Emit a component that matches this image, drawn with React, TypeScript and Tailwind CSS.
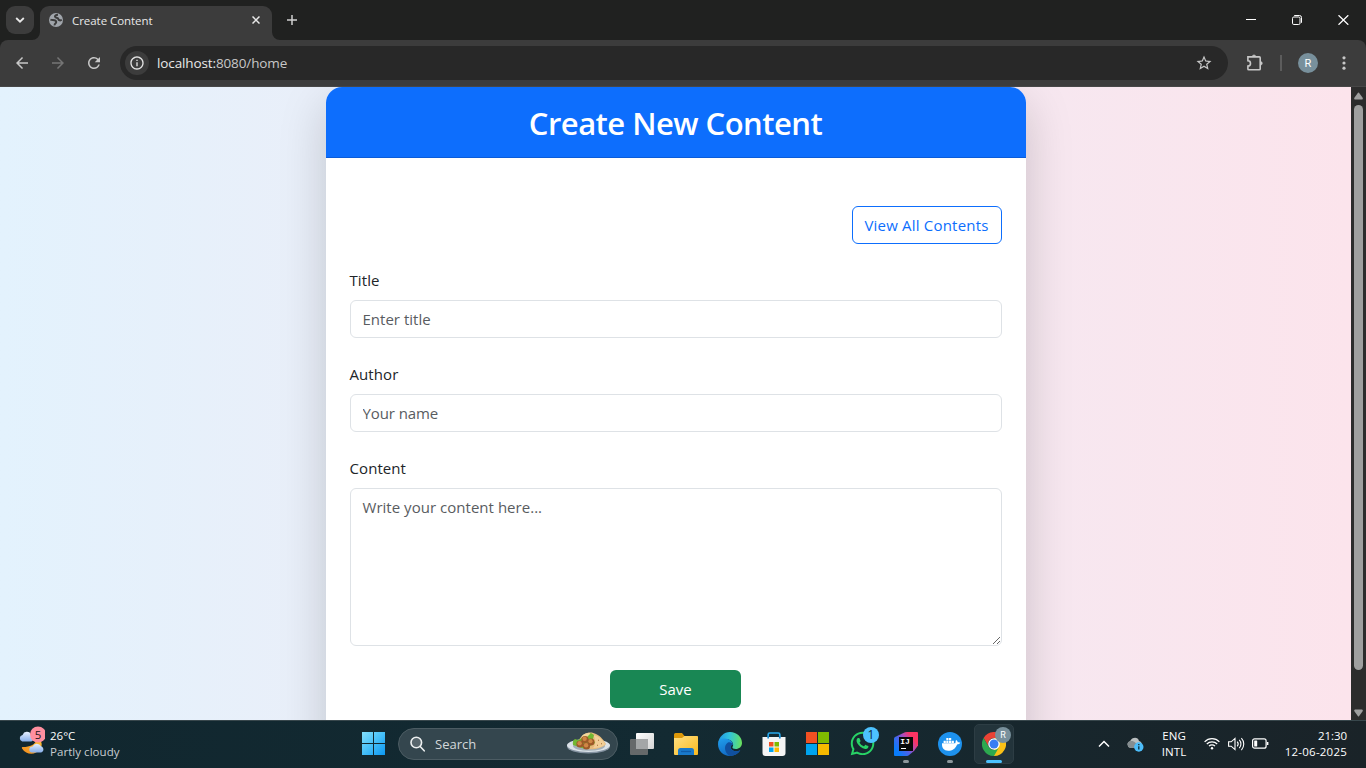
import type { ReactNode } from 'react';
import {
  MdArrowBack,
  MdArrowForward,
  MdOutlineInfo,
  MdRefresh,
  MdStarBorder,
} from 'react-icons/md';
import { FaWhatsapp } from 'react-icons/fa';

function TabStrip() {
  return (
    <div className="flex h-10 shrink-0 bg-[#202120] pl-1.5">
      <button className="mt-1.5 flex h-7 w-7 items-center justify-center rounded-[9px] bg-[#3c3c3c]">
        <svg width="10" height="6" viewBox="0 0 10 6" fill="none" stroke="#e8e8e8" strokeWidth="1.8">
          <path d="M1.2 1l3.8 3.7L8.8 1" />
        </svg>
      </button>
      <svg className="w-2 self-end ml-[-2px]" width="8" height="8" viewBox="0 0 8 8" fill="#3c3c3c">
        <path d="M8 0v8H0a8 8 0 0 0 8-8z" />
      </svg>
      <div className="mt-1.5 flex h-[34px] w-[232px] items-center rounded-t-[9px] bg-[#3c3c3c] pl-[9px] pb-[6px]">
        <svg width="14" height="14" viewBox="0 0 14 14">
          <circle cx="7" cy="7" r="7" fill="#a0a5ab" />
          <path
            d="M9 1.700C6.500 1.800 5.200 3.200 6.500 4.300S9 4.500 9.300 6 11.500 7.800 12.800 6.800M1.400 6.600C3 7.200 4 6.800 5.500 7.200S7.600 8.800 7 9.800 5.400 10.500 5.600 12.400"
            fill="none"
            stroke="#3c3c3c"
            strokeWidth="2"
          />
        </svg>
        <span className="ml-[9px] flex-1 pt-px text-[11.5px] leading-4 tracking-[-0.05px] text-[#e8e8e8]">Create Content</span>
        <svg className="mr-3" width="8" height="8" viewBox="0 0 8 8" stroke="#e8e8e8" strokeWidth="1.5">
          <path d="M.5.5l7 7M7.5.5l-7 7" />
        </svg>
      </div>
      <svg className="self-end" width="8" height="8" viewBox="0 0 8 8" fill="#3c3c3c">
        <path d="M0 0v8h8a8 8 0 0 1-8-8z" />
      </svg>
      <svg className="mt-[15px] ml-[7px]" width="10" height="10" viewBox="0 0 10 10" stroke="#d0d0d0" strokeWidth="1.5">
        <path d="M5 0v10M0 5h10" />
      </svg>
      <div className="ml-auto mr-[17px] flex gap-9 pt-[15px]">
        <svg width="10" height="10" viewBox="0 0 10 10" stroke="#fff" strokeWidth="1">
          <path d="M0 4.5h10" />
        </svg>
        <svg width="10" height="10" viewBox="0 0 10 10" fill="none" stroke="#fff" strokeWidth="1">
          <rect x=".5" y="2" width="7.5" height="7.5" rx="1.3" />
          <path d="M2.2.5H7.5a2 2 0 0 1 2 2v5.3" />
        </svg>
        <svg width="11" height="10" viewBox="0 0 11 10" stroke="#fff" strokeWidth="1.2">
          <path d="M.5.2l9.8 9.6M10.3.2L.5 9.8" />
        </svg>
      </div>
    </div>
  );
}

function Toolbar() {
  return (
    <div className="shrink-0 bg-[#202120]">
      <div className="flex h-[47px] items-center rounded-t-lg border-b border-[#474747] bg-[#3c3c3c] pl-[13px] text-[#c7c7c7]">
        <MdArrowBack size={18} />
        <MdArrowForward size={18} className="ml-[18px] text-[#757575]" />
        <MdRefresh size={18} className="ml-[18px]" />
        <div className="ml-[17px] flex h-[34px] w-[1108px] items-center rounded-full bg-[#282828] pl-[5px] pr-[15px]">
          <div className="flex h-6 w-6 items-center justify-center rounded-full bg-[#3c3c3c]">
            <MdOutlineInfo size={16} className="text-[#e3e3e3]" />
          </div>
          <span className="ml-2 flex-1 text-[13.5px] leading-5 tracking-[-0.12px] text-[#e8e8e8]">
            localhost:<span className="text-[#c7c7c7]">8080/home</span>
          </span>
          <MdStarBorder size={18} />
        </div>
        <svg className="ml-[18px]" width="18" height="18" viewBox="0 0 18 18" fill="none" stroke="#c7c7c7" strokeWidth="1.6">
          <path d="M1.900 2.900H13.300a.9.9 0 0 1 .9.9V14.900a.9.9 0 0 1-.9.9H2.800a.9.9 0 0 1-.9-.9V12a2.600 2.600 0 0 0 0-5.200z" />
          <path d="M6.300 2.600a1.700 1.700 0 0 1 3.400 0zM14.600 7.600a1.700 1.700 0 0 1 0 3.400z" fill="#c7c7c7" strokeWidth=".6" />
        </svg>
        <div className="ml-4 h-4 w-0.5 bg-[#5c5c5c]" />
        <div className="ml-4 flex h-5 w-5 items-center justify-center rounded-full bg-[#78909c] pt-px font-['Roboto',sans-serif] text-[11px] leading-none text-white">
          R
        </div>
        <svg className="ml-6" width="4" height="14" viewBox="0 0 4 14" fill="#c7c7c7">
          <circle cx="2" cy="1.8" r="1.6" />
          <circle cx="2" cy="7" r="1.6" />
          <circle cx="2" cy="12.2" r="1.6" />
        </svg>
      </div>
    </div>
  );
}

function Field({ label, children }: { label: string; children: ReactNode }) {
  return (
    <div className="mb-6 flex flex-col">
      <label className="mb-2 text-[15px] leading-6 tracking-[0.08px] text-[#212529]">{label}</label>
      {children}
    </div>
  );
}

function ContentPage() {
  return (
    <div className="flex min-h-0 flex-1">
      <main className="flex min-w-0 flex-1 items-start justify-center overflow-hidden bg-linear-to-r from-[#e3f2fd] to-[#fce4ec]">
        <section className="h-[680px] w-[700px] shrink-0 overflow-hidden rounded-2xl bg-white shadow-[0_16px_48px_rgba(0,0,0,0.175)]">
          <header className="flex h-[71px] items-center justify-center border-b border-[#0b5cd8] bg-[#0d6efd] pt-0.5">
            <h3 className="text-[31px] leading-[38px] font-semibold tracking-[-0.53px] text-white">Create New Content</h3>
          </header>
          <div className="flex flex-col px-6 pt-12">
            <button className="mb-6 h-[38px] w-[150px] self-end rounded-md border border-[#0d6efd] text-[15px] leading-6 tracking-[0.2px] text-[#0d6efd]">
              View All Contents
            </button>
            <Field label="Title">
              <input
                className="h-[38px] rounded-md border border-[#dee2e6] px-3 text-[15px] tracking-[0.01px] placeholder:text-[#595c5f]"
                placeholder="Enter title"
              />
            </Field>
            <Field label="Author">
              <input
                className="h-[38px] rounded-md border border-[#dee2e6] px-3 text-[15px] tracking-[-0.1px] placeholder:text-[#595c5f]"
                placeholder="Your name"
              />
            </Field>
            <Field label="Content">
              <textarea
                className="h-[158px] resize-y rounded-md border border-[#dee2e6] px-3 py-1.5 text-[15px] leading-6 tracking-[0.03px] placeholder:text-[#595c5f]"
                placeholder="Write your content here..."
              />
            </Field>
            <button className="h-[38px] w-[131px] self-center rounded-md bg-[#198754] text-[15px] text-white">Save</button>
          </div>
        </section>
      </main>
      <div className="flex w-[15px] shrink-0 flex-col items-center bg-[#2c2c2c] pt-[5px] pb-[3px]">
        <svg width="9" height="8" viewBox="0 0 9 8" fill="#9f9f9f">
          <path d="M4 .8Q4.500.2 5 .8L8.800 6Q9 7.500 8 7.500H1Q0 7.500.2 6z" />
        </svg>
        <div className="mt-[5px] h-[565px] w-[9px] rounded-full bg-[#9f9f9f]" />
        <svg className="mt-auto" width="9" height="8" viewBox="0 0 9 8" fill="#9f9f9f">
          <path d="M4 7.200Q4.500 7.800 5 7.200L8.800 2Q9 .5 8 .5H1Q0 .5.2 2z" />
        </svg>
      </div>
    </div>
  );
}

function WeatherIcon() {
  return (
    <svg className="mb-1.5" width="28" height="30" viewBox="0 0 28 30">
      <defs>
        <linearGradient id="cloud" x1="0" y1="0" x2="0" y2="1">
          <stop offset="0" stopColor="#e6f0ff" />
          <stop offset="1" stopColor="#86aeea" />
        </linearGradient>
        <linearGradient id="moon" x1="0" y1="1" x2="1" y2="0">
          <stop offset="0" stopColor="#f08a1c" />
          <stop offset="1" stopColor="#ffc13a" />
        </linearGradient>
      </defs>
      <path d="M20 13c5 1 6 6 3 10-4 6-13 7-18-.5-.5-1 0-1.500 1-1.500C13 21 18 19 20 13z" fill="url(#moon)" />
      <path d="M5.200 15.500a3.400 3.400 0 0 1 .4-6.600 4.600 4.600 0 0 1 8.400-.6c3 1 3 7.200 0 7.200z" fill="url(#cloud)" />
      <path d="M15 26.500a3 3 0 0 1 .6-6 4.600 4.600 0 0 1 8.400-.2c3.500 1 3 6.200-.2 6.200z" fill="url(#cloud)" />
      <circle cx="21" cy="8.500" r="8" fill="#ff8f9f" />
      <text x="21" y="12.600" textAnchor="middle" fontSize="11.500" fill="#25171b">
        5
      </text>
    </svg>
  );
}

function StartIcon() {
  return (
    <svg width="23" height="23" viewBox="0 0 23 23">
      <defs>
        <linearGradient id="start" x1="0" y1="0" x2="23" y2="23" gradientUnits="userSpaceOnUse">
          <stop offset="0" stopColor="#83dffb" />
          <stop offset=".5" stopColor="#45bff8" />
          <stop offset="1" stopColor="#0c98f2" />
        </linearGradient>
      </defs>
      <path d="M0 0h11v11H0zM12 0h11v11H12zM0 12h11v11H0zM12 12h11v11H12z" fill="url(#start)" />
    </svg>
  );
}

function FalafelIcon() {
  return (
    <svg className="mb-0.5" width="43" height="22" viewBox="0 0 43 22">
      <ellipse cx="21.500" cy="14.500" rx="21.500" ry="7" fill="#8492a0" />
      <ellipse cx="21.500" cy="13.300" rx="21.500" ry="6.600" fill="#dbe2e8" />
      <ellipse cx="22" cy="14" rx="16" ry="4.800" fill="#a3afb8" />
      <path d="M12 8C16 0 24-1 29 2c5 2 8 7 10 10-3 4-12 6-19 5z" fill="#e6bb7d" />
      <path d="M26 3c6 1 10 5 12 9-2 3-7 4-12 4 3-3 3-9 0-13z" fill="#f2cf98" />
      <path d="M6 13c-.5-3 0-5 2-6l3 1 4-2 3 1 3-5 3-1 3 2-1 4 2 4-10 6z" fill="#72b832" />
      <path d="M14.500 5c2-4 7-4.500 9-3.500L20 5z" fill="#f1d59b" />
      <g fill="#9c5928">
        <circle cx="18" cy="7.500" r="3.600" />
        <circle cx="24" cy="10" r="3.500" />
        <circle cx="13" cy="12" r="3.600" />
        <circle cx="19.500" cy="14" r="3.600" />
      </g>
      <g fill="#cf8745">
        <circle cx="17.600" cy="6.700" r="2.200" />
        <circle cx="23.500" cy="9.200" r="2.100" />
        <circle cx="12.600" cy="11.200" r="2.200" />
        <circle cx="19.100" cy="13.200" r="2.200" />
      </g>
      <path d="M31 8l1 .5M34 12l1-.5M30 13l1 .5" stroke="#a56c35" />
    </svg>
  );
}

function TaskViewIcon() {
  return (
    <svg width="24" height="22" viewBox="0 0 24 22">
      <defs>
        <linearGradient id="front" x1="0" y1="0" x2="1" y2="1">
          <stop offset="0" stopColor="#fff" />
          <stop offset="1" stopColor="#d4d4d4" />
        </linearGradient>
      </defs>
      <rect x="6" y="0" width="18" height="16" rx="1" fill="url(#front)" />
      <rect x="0" y="6" width="18" height="16" rx="1" fill="#66696a" />
      <path d="M6 6h12v10H6z" fill="#a4a6a7" />
    </svg>
  );
}

function FolderIcon() {
  return (
    <svg width="24" height="22" viewBox="0 0 24 22">
      <defs>
        <linearGradient id="folder" x1="0" y1="0" x2="1" y2="1">
          <stop offset="0" stopColor="#ffe083" />
          <stop offset="1" stopColor="#fbb91d" />
        </linearGradient>
      </defs>
      <path d="M0 1.500Q0 0 1.500 0H8l2.500 3H22.500Q24 3 24 4.500V8H0z" fill="#dd9809" />
      <path d="M0 5h8l2.500-2H23q1 0 1 1.200V21q0 1-1 1H1q-1 0-1-1z" fill="url(#folder)" />
      <path d="M4 22v-4.500Q4 15 6.500 15h11q2.500 0 2.500 2.500V22z" fill="#1979ca" />
      <path d="M7 18.500h10" stroke="#0f5ba8" strokeWidth="1.300" />
    </svg>
  );
}

function EdgeIcon() {
  return (
    <svg width="24" height="24" viewBox="0 0 24 24">
      <defs>
        <linearGradient id="edgeCrest" x1="0" y1="8" x2="24" y2="10" gradientUnits="userSpaceOnUse">
          <stop offset="0" stopColor="#2196e3" />
          <stop offset=".45" stopColor="#31c2dd" />
          <stop offset=".75" stopColor="#4bd49a" />
          <stop offset="1" stopColor="#6be05a" />
        </linearGradient>
        <linearGradient id="edgeBody" x1="4" y1="7" x2="10" y2="24" gradientUnits="userSpaceOnUse">
          <stop offset="0" stopColor="#1f9ae8" />
          <stop offset="1" stopColor="#1169c4" />
        </linearGradient>
      </defs>
      <path
        d="M0 11.500C1 4.500 6 0 12 0 19 0 24 5 24 11c0 3.800-3 6-6.200 6-2.300 0-3.800-1-3.300-2 1.500-2 .8-6.500-4.500-7.800C6 6.500 2 8 0 11.500z"
        fill="url(#edgeCrest)"
      />
      <path
        d="M0 12c.3-4 4-5.800 8-5.300 4.500.5 7 3.300 6.600 6-1.300.3-2.200 1.300-2 2.800.5 3.200 5 4.800 9.700 2.800C20 22 16 24 12 24 5 24 0 18.800 0 12z"
        fill="url(#edgeBody)"
      />
      <path
        d="M10 10.500C5.500 13 6 21 12 24c4 0 8-2 10.300-5.700-4.700 2-9.200.4-9.700-2.800-.2-1.500.7-2.500 2-2.800.1-1.700-2.500-3.200-4.600-2.200z"
        fill="#10509f"
      />
    </svg>
  );
}

function StoreIcon() {
  return (
    <svg width="24" height="24" viewBox="0 0 24 24">
      <path d="M6.200 6V2.500Q6.200 1 7.700 1h8.600q1.500 0 1.500 1.500V6" fill="none" stroke="#29a9ec" strokeWidth="1.700" />
      <path d="M.5 5h23v16q0 3-3 3h-17q-3 0-3-3z" fill="#f4f4f4" />
      <path d="M6.200 4v2.500M17.800 4v2.500" stroke="#1686cb" strokeWidth="1.700" />
      <path d="M7 10h4.500v4.500H7z" fill="#f25022" />
      <path d="M12.500 10H17v4.500h-4.500z" fill="#7fba00" />
      <path d="M7 15.500h4.500V20H7z" fill="#00a4ef" />
      <path d="M12.500 15.500H17V20h-4.500z" fill="#ffb900" />
    </svg>
  );
}

function MicrosoftIcon() {
  return (
    <svg className="mr-px" width="23" height="23" viewBox="0 0 23 23">
      <path d="M0 0h11v11H0z" fill="#f25022" />
      <path d="M12 0h11v11H12z" fill="#7fba00" />
      <path d="M0 12h11v11H0z" fill="#00a4ef" />
      <path d="M12 12h11v11H12z" fill="#f5b900" />
    </svg>
  );
}

function IntelliJIcon() {
  return (
    <svg width="24" height="24" viewBox="0 0 24 24">
      <defs>
        <linearGradient id="ij" x1="2" y1="18" x2="22" y2="4" gradientUnits="userSpaceOnUse">
          <stop offset="0" stopColor="#087cfa" />
          <stop offset=".35" stopColor="#4a63ea" />
          <stop offset=".6" stopColor="#b14ab8" />
          <stop offset=".85" stopColor="#fb3463" />
        </linearGradient>
      </defs>
      <path d="M0 7Q0 5.500 1 5L11 .3Q12 0 13 0H23Q24 0 24 1V13.500L20 19l-5.500 4.600Q14 24 13 24H1Q0 24 0 23z" fill="url(#ij)" />
      <path d="M5 5h14v14H5z" fill="#090909" />
      <text x="6.200" y="12.300" fontSize="8" fontWeight="700" fill="#fff" fontFamily="Liberation Mono">
        IJ
      </text>
      <path d="M7 16.500h5" stroke="#fff" />
    </svg>
  );
}

function DockerIcon() {
  return (
    <svg width="24" height="24" viewBox="0 0 24 24">
      <circle cx="12" cy="12" r="12" fill="#1d91ed" />
      <path
        d="M4 11.300h13.200c.6-1 .2-2.300.9-3.300 1.100.7 1.600 1.500 1.700 2.300 1-.2 2 0 2.500.5-.6 1.200-1.800 1.600-3.200 1.600-1.700 4.300-4.800 6.300-8.900 6.300-4.300 0-6.500-2.700-6.200-7.400z"
        fill="#fff"
      />
      <path d="M5.600 8.700h2.200v2.200H5.600zM8.300 8.700h2.200v2.200H8.300zM11 8.700h2.200v2.200H11zM13.700 8.700h2.200v2.200h-2.200zM8.300 6.100h2.200v2.200H8.300zM11 6.100h2.200v2.200H11z" fill="#fff" />
    </svg>
  );
}

function ChromeIcon() {
  return (
    <svg width="24" height="24" viewBox="0 0 24 24">
      <path d="M12 12L22.400 6A12 12 0 0 1 12 24z" fill="#fbc116" />
      <path d="M12 6h10.400L17.200 15z" fill="#fbc116" />
      <path d="M1.600 6A12 12 0 0 1 22.400 6H12a6 6 0 0 0-5.200 9z" fill="#ea4335" />
      <path d="M1.600 6A12 12 0 0 0 12 24l5.200-9a6 6 0 0 1-10.400 0z" fill="#2da94f" />
      <circle cx="12" cy="12" r="5.800" fill="#fff" />
      <circle cx="12" cy="12" r="4.500" fill="#397df2" />
    </svg>
  );
}

function AppCell({ children, running = false, active = false }: { children: ReactNode; running?: boolean; active?: boolean }) {
  return (
    <div className="flex h-12 w-11 items-center justify-center">
      <div className={active ? 'relative flex h-10 w-10 items-center justify-center rounded-[5px] border border-[#2d3d44] bg-[#23343b]' : 'relative flex h-10 w-10 items-center justify-center'}>
        {children}
        {running && <div className="absolute bottom-px h-[3px] w-1.5 rounded-full bg-[#8c979c]" />}
        {active && <div className="absolute bottom-0 h-[3px] w-4 rounded-full bg-[#4cc2ff]" />}
      </div>
    </div>
  );
}

function SystemTray() {
  return (
    <div className="flex h-full flex-1 items-center justify-end pr-[19px] text-white">
      <svg width="12" height="8" viewBox="0 0 12 8" fill="none" stroke="#fff" strokeWidth="1.500">
        <path d="M1 6.500l5-5 5 5" />
      </svg>
      <svg className="ml-[17px]" width="17" height="16" viewBox="0 0 17 16">
        <path d="M3.500 12A3.500 3.500 0 0 1 3 5.200C5 1 11 .5 12 5c4 .5 3.500 7 0 7z" fill="#b9bebf" />
        <path d="M3.500 12A3.500 3.500 0 0 1 3 5.200C7 4 8 7 12 9v3z" fill="#858d90" />
        <circle cx="11.800" cy="11" r="4.700" fill="#4cbdfa" />
        <path d="M11.800 10.200v3.300M11.800 8v1.300" stroke="#102b36" strokeWidth="1.300" />
      </svg>
      <div className="ml-4 w-[28px] pt-px text-center text-[11.5px] leading-4 tracking-[0.1px] whitespace-nowrap">
        ENG
        <br />
        INTL
      </div>
      <svg className="ml-4" width="16" height="13" viewBox="0 0 16 13" fill="none" stroke="#fff" strokeWidth="1.200">
        <path d="M.6 4.800a10.200 10.200 0 0 1 14.800 0M2.800 7a7.200 7.200 0 0 1 10.400 0M5 9.200a4.200 4.200 0 0 1 6 0" />
        <circle cx="8" cy="11.200" r="1.200" fill="#fff" stroke="none" />
      </svg>
      <svg className="ml-2" width="17" height="14" viewBox="0 0 17 14" fill="none" stroke="#fff" strokeWidth="1.100">
        <path d="M.6 4.800h2.600L7 1.400v11.200L3.200 9.200H.6zM9.200 4.700a3.500 3.500 0 0 1 0 4.600M11.300 2.900a6 6 0 0 1 0 8.200M13.400 1a8.800 8.800 0 0 1 0 12" />
      </svg>
      <svg className="ml-[7px]" width="17" height="11" viewBox="0 0 17 11" fill="none" stroke="#fff" strokeWidth="1.200">
        <rect x=".6" y=".8" width="13.500" height="9.400" rx="2" />
        <path d="M15.600 4v3" strokeWidth="1.600" />
        <rect x="2.200" y="2.400" width="3" height="6.200" rx=".5" fill="#fff" stroke="none" />
      </svg>
      <div className="ml-[15px] w-[63px] text-right text-[11.5px] leading-4 whitespace-nowrap">
        <span className="tracking-[-0.05px]">21:30</span>
        <br />
        <span className="tracking-[0.22px]">12-06-2025</span>
      </div>
    </div>
  );
}

function Taskbar() {
  return (
    <footer className="flex h-12 shrink-0 items-center border-t border-[#38474c] bg-linear-to-r from-[#11272f] via-[#132a32] to-[#1a2328] pb-0.5">
      <div className="flex w-[351px] items-center pl-[17px]">
        <WeatherIcon />
        <div className="ml-[5px] text-[11.5px] leading-4 text-white">
          26°C
          <br />
          <span className="tracking-[0.05px] text-[#c8cdd0]">Partly cloudy</span>
        </div>
      </div>
      <div className="flex w-11 justify-center">
        <StartIcon />
      </div>
      <div className="mx-[3px] mr-0.5 flex h-8 w-[220px] items-center rounded-full border border-[#4c5c63] bg-[#34464e] pr-[7px] pl-[11px]">
        <svg width="15" height="16" viewBox="0 0 15 16" fill="#58666d" stroke="#eceff0" strokeWidth="1.600">
          <circle cx="6.300" cy="6.500" r="5.300" />
          <path d="M10.200 10.500l4 4.300" strokeLinecap="round" />
        </svg>
        <span className="ml-2.5 flex-1 text-[13px] leading-5 text-[#d3d8da]">Search</span>
        <FalafelIcon />
      </div>
      <AppCell><TaskViewIcon /></AppCell>
      <AppCell><FolderIcon /></AppCell>
      <AppCell><EdgeIcon /></AppCell>
      <AppCell><StoreIcon /></AppCell>
      <AppCell><MicrosoftIcon /></AppCell>
      <AppCell>
        <FaWhatsapp size={27} className="text-[#28d366]" />
        <div className="absolute top-[3px] right-[3px] flex h-4 w-4 items-center justify-center rounded-full bg-[#4cc2ff] text-[12px] leading-none text-[#102b36]">1</div>
      </AppCell>
      <AppCell running><IntelliJIcon /></AppCell>
      <AppCell running><DockerIcon /></AppCell>
      <AppCell active>
        <ChromeIcon />
        <div className="absolute top-[2px] right-[2px] flex h-4 w-4 items-center justify-center rounded-full bg-[#78909c] pt-px font-['Roboto',sans-serif] text-[9px] leading-none text-white">R</div>
      </AppCell>
      <SystemTray />
    </footer>
  );
}

export default function App() {
  return (
    <div className="flex h-[768px] w-[1366px] flex-col overflow-hidden font-['Open_Sans','Noto_Sans',sans-serif]">
      <TabStrip />
      <Toolbar />
      <ContentPage />
      <Taskbar />
    </div>
  );
}
